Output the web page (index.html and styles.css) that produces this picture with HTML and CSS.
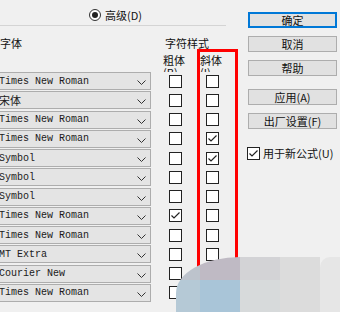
FILE: index.html
```html
<!DOCTYPE html>
<html lang="zh-CN">
<head>
  <meta charset="UTF-8">
  <title>定义风格</title>
  <link rel="stylesheet" href="styles.css">
</head>
<body>

  <div class="dialog">

    <!-- Left: mode + font table -->
    <div class="main">
      <div class="mode">
        <span class="radio"><span class="dot"></span></span>
        <span class="mode-text">高级(D)</span>
      </div>

      <div class="font-table">
        <div class="th th-font">字体</div>
        <div class="th th-style">字符样式</div>
        <div class="lbl lbl-bold">粗体<br>(B)</div>
        <div class="lbl lbl-italic">斜体<br>(I)</div>

        <div class="sel"><span>Times New Roman</span><svg class="chev" width="9" height="5" viewBox="0 0 9 5"><polyline points="0.5,0.5 4.5,4.5 8.5,0.5"/></svg></div>
        <div class="cb-cell"><span class="cb"></span></div>
        <div class="cb-cell"><span class="cb"></span></div>

        <div class="sel"><span class="cjk">宋体</span><svg class="chev" width="9" height="5" viewBox="0 0 9 5"><polyline points="0.5,0.5 4.5,4.5 8.5,0.5"/></svg></div>
        <div class="cb-cell"><span class="cb"></span></div>
        <div class="cb-cell"><span class="cb"></span></div>

        <div class="sel"><span>Times New Roman</span><svg class="chev" width="9" height="5" viewBox="0 0 9 5"><polyline points="0.5,0.5 4.5,4.5 8.5,0.5"/></svg></div>
        <div class="cb-cell"><span class="cb"></span></div>
        <div class="cb-cell"><span class="cb"></span></div>

        <div class="sel"><span>Times New Roman</span><svg class="chev" width="9" height="5" viewBox="0 0 9 5"><polyline points="0.5,0.5 4.5,4.5 8.5,0.5"/></svg></div>
        <div class="cb-cell"><span class="cb"></span></div>
        <div class="cb-cell"><span class="cb checked"><svg width="11" height="11" viewBox="0 0 11 11"><polyline points="1.5,5.5 4,8 9.5,2.5"/></svg></span></div>

        <div class="sel"><span>Symbol</span><svg class="chev" width="9" height="5" viewBox="0 0 9 5"><polyline points="0.5,0.5 4.5,4.5 8.5,0.5"/></svg></div>
        <div class="cb-cell"><span class="cb"></span></div>
        <div class="cb-cell"><span class="cb checked"><svg width="11" height="11" viewBox="0 0 11 11"><polyline points="1.5,5.5 4,8 9.5,2.5"/></svg></span></div>

        <div class="sel"><span>Symbol</span><svg class="chev" width="9" height="5" viewBox="0 0 9 5"><polyline points="0.5,0.5 4.5,4.5 8.5,0.5"/></svg></div>
        <div class="cb-cell"><span class="cb"></span></div>
        <div class="cb-cell"><span class="cb"></span></div>

        <div class="sel"><span>Symbol</span><svg class="chev" width="9" height="5" viewBox="0 0 9 5"><polyline points="0.5,0.5 4.5,4.5 8.5,0.5"/></svg></div>
        <div class="cb-cell"><span class="cb"></span></div>
        <div class="cb-cell"><span class="cb"></span></div>

        <div class="sel"><span>Times New Roman</span><svg class="chev" width="9" height="5" viewBox="0 0 9 5"><polyline points="0.5,0.5 4.5,4.5 8.5,0.5"/></svg></div>
        <div class="cb-cell"><span class="cb checked"><svg width="11" height="11" viewBox="0 0 11 11"><polyline points="1.5,5.5 4,8 9.5,2.5"/></svg></span></div>
        <div class="cb-cell"><span class="cb"></span></div>

        <div class="sel"><span>Times New Roman</span><svg class="chev" width="9" height="5" viewBox="0 0 9 5"><polyline points="0.5,0.5 4.5,4.5 8.5,0.5"/></svg></div>
        <div class="cb-cell"><span class="cb"></span></div>
        <div class="cb-cell"><span class="cb"></span></div>

        <div class="sel"><span>MT Extra</span><svg class="chev" width="9" height="5" viewBox="0 0 9 5"><polyline points="0.5,0.5 4.5,4.5 8.5,0.5"/></svg></div>
        <div class="cb-cell"><span class="cb"></span></div>
        <div class="cb-cell"><span class="cb"></span></div>

        <div class="sel"><span>Courier New</span><svg class="chev" width="9" height="5" viewBox="0 0 9 5"><polyline points="0.5,0.5 4.5,4.5 8.5,0.5"/></svg></div>
        <div class="cb-cell"><span class="cb"></span></div>
        <div class="cb-cell"><span class="cb"></span></div>

        <div class="sel"><span>Times New Roman</span><svg class="chev" width="9" height="5" viewBox="0 0 9 5"><polyline points="0.5,0.5 4.5,4.5 8.5,0.5"/></svg></div>
        <div class="cb-cell"><span class="cb"></span></div>
        <div class="cb-cell"><span class="cb"></span></div>
      </div>
    </div>

    <!-- Right: buttons -->
    <div class="side">
      <div class="btn btn-default">确定</div>
      <div class="btn">取消</div>
      <div class="btn">帮助</div>
      <div class="btn btn-apply">应用(A)</div>
      <div class="btn">出厂设置(F)</div>
      <div class="side-check">
        <span class="cb checked"><svg width="11" height="11" viewBox="0 0 11 11"><polyline points="1.5,5.5 4,8 9.5,2.5"/></svg></span>
        <span>用于新公式(U)</span>
      </div>
    </div>

    <!-- red annotation around italic column -->
    <div class="highlight"></div>

    <!-- pixelated smudge at the bottom right -->
    <div class="smudge">
      <div class="s s1"></div><div class="s s2"></div><div class="s s3"></div><div class="s s4"></div><div class="s s5"></div>
      <div class="s s6"></div><div class="s s7"></div><div class="s s8"></div><div class="s s9"></div><div class="s s10"></div>
    </div>

  </div>

</body>
</html>
```

FILE: styles.css
```css
html, body {
  margin: 0;
  height: 312px;
  overflow: hidden;
}

body {
  background-color: #f0f0f0;
  font-family: "Noto Sans CJK SC", "Liberation Sans", sans-serif;
  font-size: 11px;
  color: #111;
}

.dialog {
  position: relative;
  display: flex;
  height: 312px;
}

/* Left part */
.main {
  width: 248px;
  flex-shrink: 0;
}

.mode {
  width: 226px;
  height: 26px;
  box-sizing: border-box;
  padding: 9px 0 0 89px;
  display: flex;
  gap: 4px;
  align-items: flex-start;
  border-bottom: 1px solid #d4d4d4;
}

.radio {
  width: 12px;
  height: 12px;
  box-sizing: border-box;
  border: 1px solid #333;
  border-radius: 50%;
  background-color: white;
  display: flex;
  align-items: center;
  justify-content: center;
}

.radio .dot {
  width: 6px;
  height: 6px;
  border-radius: 50%;
  background-color: #222;
}

.mode-text {
  line-height: 12px;
}

.font-table {
  display: grid;
  grid-template-columns: 154px 31px 37px;
  grid-template-rows: 28px 18px;
  grid-auto-rows: 19.25px;
  margin-left: -3px;
}

.th {
  padding-top: 11px;
  line-height: 13px;
}

.th-font {
  padding-left: 3px;
}

.th-style {
  grid-column: 2 / 4;
  padding-left: 14px;
  white-space: nowrap;
}

/* labels are cut by the first row, as in the dialog */
.lbl {
  height: 18px;
  line-height: 12px;
  white-space: nowrap;
  clip-path: inset(0 -30px 0 0);
}

.lbl-bold {
  grid-column: 2;
  padding-left: 12px;
}

.lbl-italic {
  grid-column: 3;
  padding-left: 18px;
}

/* Font dropdowns */
.sel {
  grid-column: 1;
  height: 18px;
  box-sizing: border-box;
  border: 1px solid #adadad;
  background-color: #e4e4e4;
  display: flex;
  align-items: center;
  justify-content: space-between;
  padding: 0 4px 0 1px;
  font-family: "Liberation Mono", "DejaVu Sans Mono", monospace;
  font-size: 10px;
  color: #1a1a1a;
}

.sel .cjk {
  font-family: "Noto Sans CJK SC", sans-serif;
  font-size: 11px;
}

.chev {
  margin-top: 3px;
}

.chev polyline {
  fill: none;
  stroke: #333;
  stroke-width: 1;
}

.cb-cell {
  height: 18px;
  display: flex;
  align-items: center;
  justify-content: flex-end;
}

.cb {
  width: 13px;
  height: 13px;
  box-sizing: border-box;
  border: 1px solid #222;
  background-color: white;
  display: flex;
  align-items: center;
  justify-content: center;
  flex-shrink: 0;
}

.cb svg polyline {
  fill: none;
  stroke: #222;
  stroke-width: 1.2;
}

/* Right buttons */
.side {
  width: 89px;
  padding-top: 12px;
}

.btn {
  height: 16px;
  box-sizing: border-box;
  border: 1px solid #adadad;
  background-color: #e1e1e1;
  text-align: center;
  line-height: 14px;
  margin-bottom: 8px;
}

.btn-default {
  border: 2px solid #0078d7;
  line-height: 12px;
}

.btn-apply {
  margin-top: 13px;
}

.side-check {
  display: flex;
  align-items: center;
  gap: 3px;
  margin-top: 18px;
  margin-left: -1px;
  line-height: 13px;
}

/* Red highlight box */
.highlight {
  position: absolute;
  left: 197px;
  top: 49px;
  width: 41px;
  height: 250px;
  box-sizing: border-box;
  border: 3px solid #ff0000;
}

/* Smudge overlay */
.smudge {
  position: absolute;
  left: 176px;
  top: 257px;
  width: 164px;
  height: 55px;
  overflow: hidden;
  border-top-left-radius: 64px 36px;
  display: grid;
  grid-template-columns: 24px 40px 40px 40px 20px;
  grid-template-rows: 23px 32px;
}

.s1 { background-color: #bdc3cc; }
.s2 { background-color: #bfbac4; }
.s3 { background-color: #d3d3d6; }
.s4 { background-color: #dcdcdc; }
.s5 { background-color: #e6e6e6; border-top-left-radius: 10px; }
.s6 { background-color: #b5c9d6; }
.s7 { background-color: #a9c5d8; }
.s8 { background-color: #d7dadb; }
.s9 { background-color: #dcdcdc; }
.s10 { background-color: #e6e6e6; }
```
